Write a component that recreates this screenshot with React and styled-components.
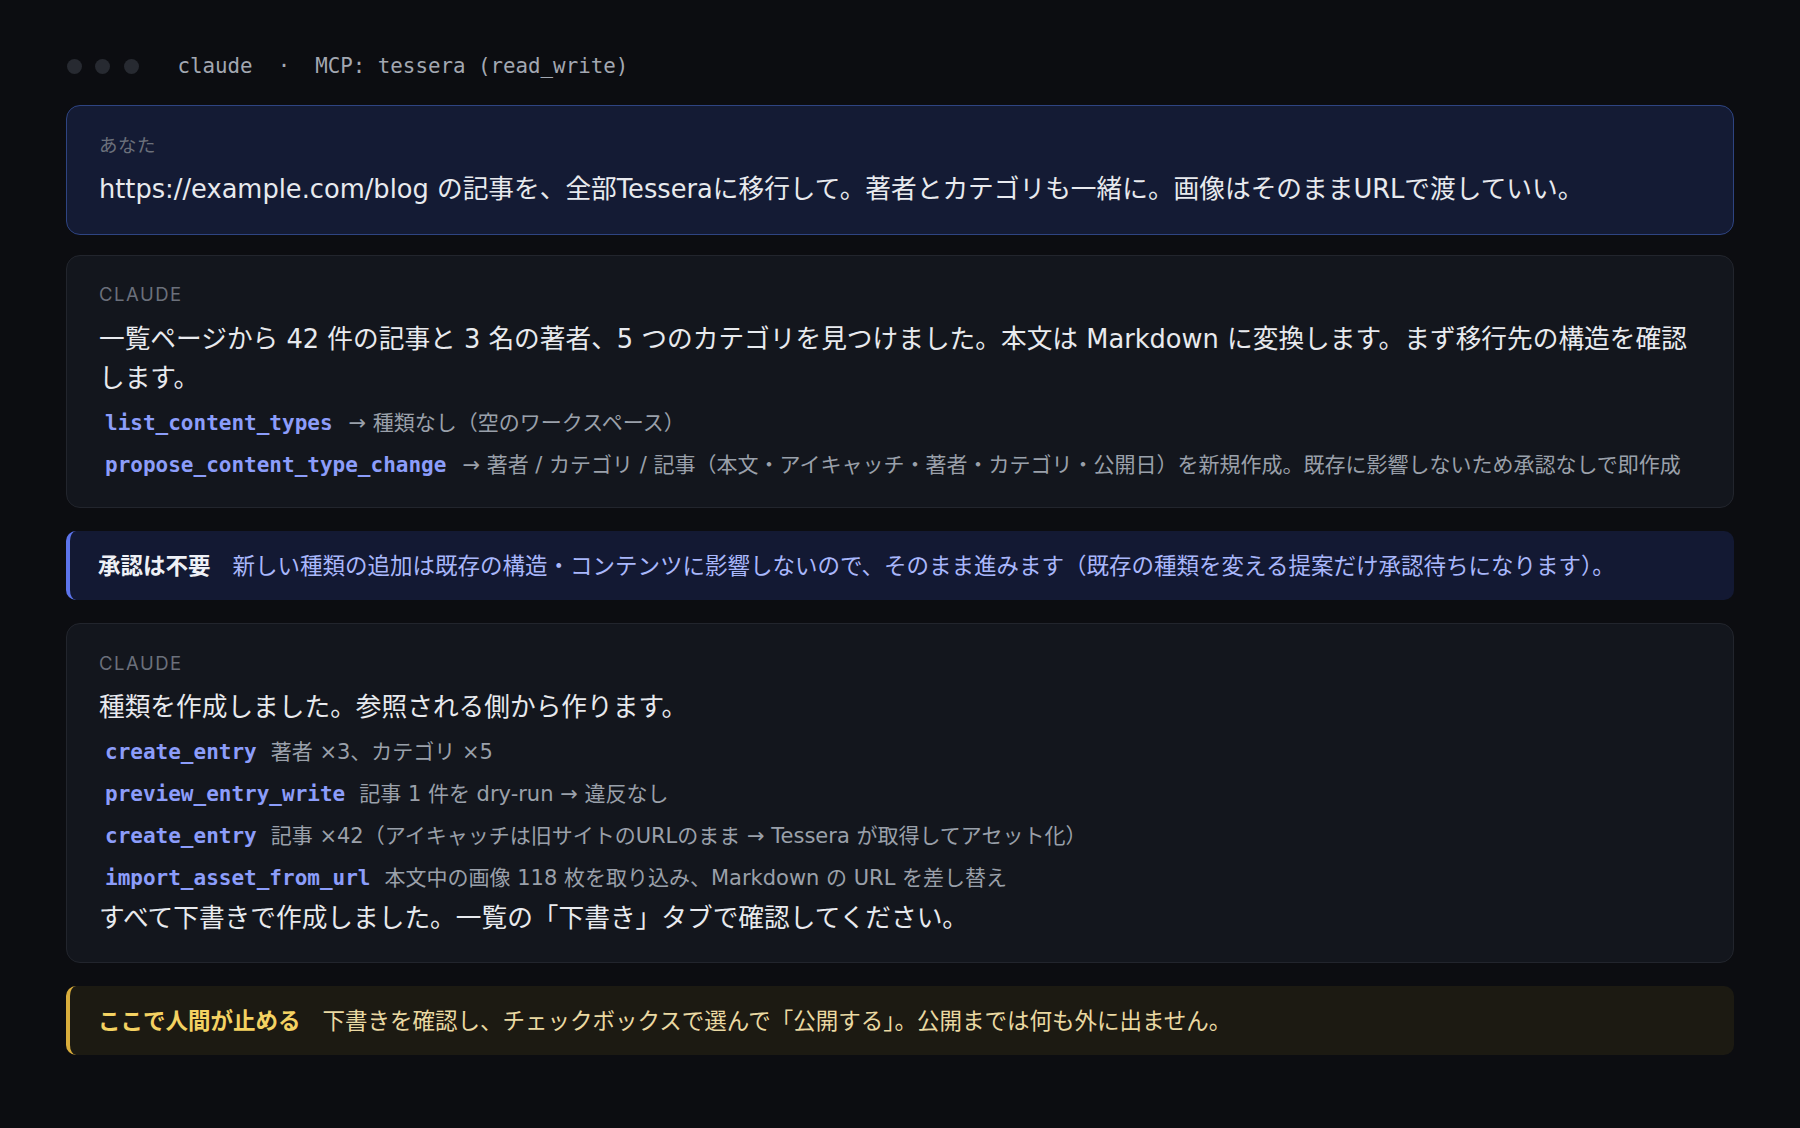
import React from 'react';
import styled, { createGlobalStyle } from 'styled-components';

const GlobalStyle = createGlobalStyle`
  html, body {
    margin: 0;
    padding: 0;
    background: #0c0d11;
  }
  body {
    font-family: "DejaVu Sans", "Noto Sans CJK JP", sans-serif;
    color: #e6e8ec;
  }
`;

export const Page = styled.div`
  min-height: 1128px;
  box-sizing: border-box;
  padding: 51px 66px 40px;
  display: flex;
  flex-direction: column;
  gap: 20px;
`;

export const TitleBar = styled.div`
  display: flex;
  align-items: center;
  height: 30px;
  margin-bottom: 4px;
`;

export const Dots = styled.div`
  display: flex;
  gap: 13.5px;
  padding-left: 0.5px;
  margin-right: 39px;
`;

export const Dot = styled.span`
  width: 15px;
  height: 15px;
  border-radius: 50%;
  background: #272a31;
`;

export const TitleText = styled.div`
  font-family: "DejaVu Sans Mono", "Liberation Mono", monospace;
  font-size: 20.8px;
  color: #a3a8b2;
  white-space: pre;
`;

export const Bubble = styled.div`
  border-radius: 14px;
  padding: 25.5px 32px 24.5px;
  background: ${(p) => (p.user ? '#141b34' : '#13161d')};
  border: 1.5px solid ${(p) => (p.user ? '#2e4482' : '#22252d')};
`;

export const Who = styled.div`
  font-family: "Inter", "Noto Sans CJK JP", sans-serif;
  font-size: 18.5px;
  line-height: 26px;
  color: #6b707b;
  letter-spacing: ${(p) => (p.caps ? '1.5px' : '0.5px')};
  text-transform: uppercase;
  margin-bottom: 12.5px;
`;

export const Text = styled.p`
  margin: 2.5px 0 7px;
  font-size: 25.7px;
  line-height: 39px;
  color: #e8eaee;
  &:last-child {
    margin-bottom: 0;
  }
`;

export const ToolRow = styled.div`
  display: flex;
  align-items: baseline;
  height: 36px;
  line-height: 36px;
  margin-top: 6px;
  padding-left: 6px;
  white-space: nowrap;
`;

export const ToolName = styled.code`
  font-family: "DejaVu Sans Mono", "Liberation Mono", monospace;
  font-weight: bold;
  font-size: 21px;
  color: #8c9dfa;
  margin-right: ${(p) => (p.arrow ? '16px' : '14px')};
`;

export const ToolDesc = styled.span`
  font-size: 21px;
  color: #9aa0aa;
`;

const tones = {
  blue: { bg: '#131933', bar: '#5c74ec', label: '#eef0f6', text: '#a9b7fb' },
  yellow: { bg: '#1c1a12', bar: '#d9ad3c', label: '#f4d262', text: '#ead9a2' },
};

export const Notice = styled.div`
  display: flex;
  align-items: center;
  min-height: 69px;
  box-sizing: border-box;
  margin: 3px 0;
  padding: 0 28px;
  border-radius: 10px;
  background: ${(p) => tones[p.tone].bg};
  border-left: 4px solid ${(p) => tones[p.tone].bar};
  font-size: 22.5px;
  line-height: 34px;
`;

export const NoticeLabel = styled.strong`
  font-weight: 700;
  color: ${(p) => tones[p.tone].label};
  margin-right: 22px;
  white-space: nowrap;
`;

export const NoticeText = styled.span`
  color: ${(p) => tones[p.tone].text};
`;

const firstTools = [
  { name: 'list_content_types', desc: '→ 種類なし（空のワークスペース）', arrow: true },
  {
    name: 'propose_content_type_change',
    desc: '→ 著者 / カテゴリ / 記事（本文・アイキャッチ・著者・カテゴリ・公開日）を新規作成。既存に影響しないため承認なしで即作成',
    arrow: true,
  },
];

const secondTools = [
  { name: 'create_entry', desc: '著者 ×3、カテゴリ ×5' },
  { name: 'preview_entry_write', desc: '記事 1 件を dry-run → 違反なし' },
  { name: 'create_entry', desc: '記事 ×42（アイキャッチは旧サイトのURLのまま → Tessera が取得してアセット化）' },
  { name: 'import_asset_from_url', desc: '本文中の画像 118 枚を取り込み、Markdown の URL を差し替え' },
];

const Tool = ({ name, desc, arrow }) => (
  <ToolRow>
    <ToolName arrow={arrow}>{name}</ToolName>
    <ToolDesc>{desc}</ToolDesc>
  </ToolRow>
);

const App = () => {
  return (
    <>
      <GlobalStyle />
      <Page>
        <TitleBar>
          <Dots>
            <Dot />
            <Dot />
            <Dot />
          </Dots>
          <TitleText>{'claude  ·  MCP: tessera (read_write)'}</TitleText>
        </TitleBar>

        <Bubble user>
          <Who>あなた</Who>
          <Text>
            https://example.com/blog の記事を、全部Tesseraに移行して。著者とカテゴリも一緒に。画像はそのままURLで渡していい。
          </Text>
        </Bubble>

        <Bubble>
          <Who caps>Claude</Who>
          <Text>
            一覧ページから 42 件の記事と 3 名の著者、5 つのカテゴリを見つけました。本文は Markdown に変換します。まず移行先の構造を確認します。
          </Text>
          {firstTools.map((t, i) => (
            <Tool key={i} {...t} />
          ))}
        </Bubble>

        <Notice tone="blue">
          <NoticeLabel tone="blue">承認は不要</NoticeLabel>
          <NoticeText tone="blue">
            新しい種類の追加は既存の構造・コンテンツに影響しないので、そのまま進みます（既存の種類を変える提案だけ承認待ちになります）。
          </NoticeText>
        </Notice>

        <Bubble>
          <Who caps>Claude</Who>
          <Text>種類を作成しました。参照される側から作ります。</Text>
          {secondTools.map((t, i) => (
            <Tool key={i} {...t} />
          ))}
          <Text>すべて下書きで作成しました。一覧の「下書き」タブで確認してください。</Text>
        </Bubble>

        <Notice tone="yellow">
          <NoticeLabel tone="yellow">ここで人間が止める</NoticeLabel>
          <NoticeText tone="yellow">
            下書きを確認し、チェックボックスで選んで「公開する」。公開までは何も外に出ません。
          </NoticeText>
        </Notice>
      </Page>
    </>
  );
};

export default App;
